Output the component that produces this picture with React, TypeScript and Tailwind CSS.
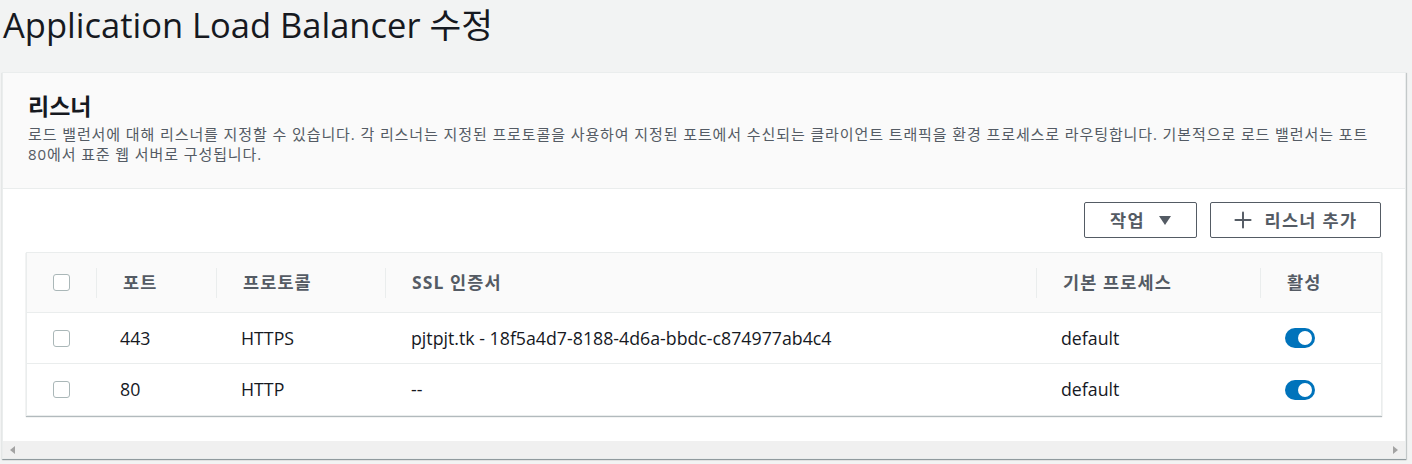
import { Plus } from "lucide-react";

const font = { fontFamily: "'Open Sans', 'Noto Sans CJK KR', sans-serif" };

const rows = [
  { port: "443", protocol: "HTTPS", cert: "pjtpjt.tk - 18f5a4d7-8188-4d6a-bbdc-c874977ab4c4", process: "default" },
  { port: "80", protocol: "HTTP", cert: "--", process: "default" },
];

const cols = "grid grid-cols-[69px_120px_169px_651px_224px_1fr]";

function Checkbox() {
  return <div className="h-[17px] w-[17px] rounded-[3px] border border-[#aab7b8] bg-white" />;
}

function Toggle() {
  return (
    <div className="flex h-[20px] w-[30px] items-center justify-end rounded-full bg-[#0073bb] px-[3px]">
      <div className="h-[14px] w-[14px] rounded-full bg-white" />
    </div>
  );
}

function HeadCell({ children }: { children: React.ReactNode }) {
  return (
    <div className="flex h-full items-center">
      <div className="h-[30px] w-px bg-[#eaeded]" />
      <div className="pl-[26px] text-[17.5px] font-bold tracking-[1.1px] text-[#545b64]">{children}</div>
    </div>
  );
}

export default function App() {
  return (
    <div className="h-[464px] w-[1412px] overflow-hidden bg-[#f2f3f3]" style={font}>
      <h1 className="pl-[3px] pt-[1px] text-[34.5px] leading-[48px] text-[#16191f]">
        Application Load Balancer 수정
      </h1>

      <div className="ml-[2px] mt-[23px] w-[1404px] border border-[#eaeded] bg-white shadow-[0_1px_1px_0_rgba(0,28,36,0.3),1px_1px_1px_0_rgba(0,28,36,0.15)]">
        <div className="h-[116px] border-b border-[#eaeded] bg-[#fafafa] px-[25px] pt-[17px]">
          <h2 className="text-[23px] font-bold leading-[32px] text-[#16191f]">리스너</h2>
          <p className="mt-[2px] pr-[10px] text-[15px] leading-[20px] tracking-[0.9px] text-[#545b64]">
            로드 밸런서에 대해 리스너를 지정할 수 있습니다. 각 리스너는 지정된 프로토콜을 사용하여 지정된 포트에서 수신되는 클라이언트 트래픽을 환경 프로세스로 라우팅합니다. 기본적으로 로드 밸런서는 포트 80에서 표준 웹 서버로 구성됩니다.
          </p>
        </div>

        <div className="px-[23px] pb-[25px] pt-[13px]">
          <div className="flex justify-end gap-[13px] pr-[1px]">
            <button className="flex h-[36px] w-[113px] items-center justify-center gap-[14px] rounded-[2px] border border-[#545b64] text-[17.5px] font-bold tracking-[1.5px] text-[#545b64]">
              작업
              <svg width="12" height="9" viewBox="0 0 12 9">
                <path d="M0 0h12L6 9z" fill="#545b64" />
              </svg>
            </button>
            <button className="flex h-[36px] w-[171px] items-center justify-center gap-[9px] rounded-[2px] border border-[#545b64] pr-[4px] text-[17.5px] font-bold tracking-[1.3px] text-[#545b64]">
              <Plus size={26} strokeWidth={1.8} />
              리스너 추가
            </button>
          </div>

          <div className="mt-[14px] border border-[#eaeded] bg-white shadow-[0_1px_1px_0_rgba(0,28,36,0.3)]">
            <div className={`${cols} h-[60px] border-b border-[#eaeded] bg-[#fafafa]`}>
              <div className="flex items-center pl-[26px]">
                <Checkbox />
              </div>
              <HeadCell>포트</HeadCell>
              <HeadCell>프로토콜</HeadCell>
              <HeadCell>SSL 인증서</HeadCell>
              <HeadCell>기본 프로세스</HeadCell>
              <HeadCell>활성</HeadCell>
            </div>
            {rows.map((r, i) => (
              <div
                key={r.port}
                className={`${cols} h-[51px] items-center text-[17.75px] text-[#16191f] ${i === 0 ? "border-b border-[#eaeded]" : ""}`}
              >
                <div className="pl-[26px]">
                  <Checkbox />
                </div>
                <div className="pl-[24px]">{r.port}</div>
                <div className="pl-[25px]">{r.protocol}</div>
                <div className="pl-[26px]">{r.cert}</div>
                <div className="pl-[25px]">{r.process}</div>
                <div className="pl-[25px]">
                  <Toggle />
                </div>
              </div>
            ))}
          </div>
        </div>

        <div className="flex h-[17px] items-center justify-between bg-[#f0f0f0] px-[7px]">
          <svg width="5" height="8" viewBox="0 0 5 8">
            <path d="M5 0v8L0 4z" fill="#a3a3a3" />
          </svg>
          <svg width="5" height="8" viewBox="0 0 5 8">
            <path d="M0 0v8l5-4z" fill="#a3a3a3" />
          </svg>
        </div>
      </div>
    </div>
  );
}
